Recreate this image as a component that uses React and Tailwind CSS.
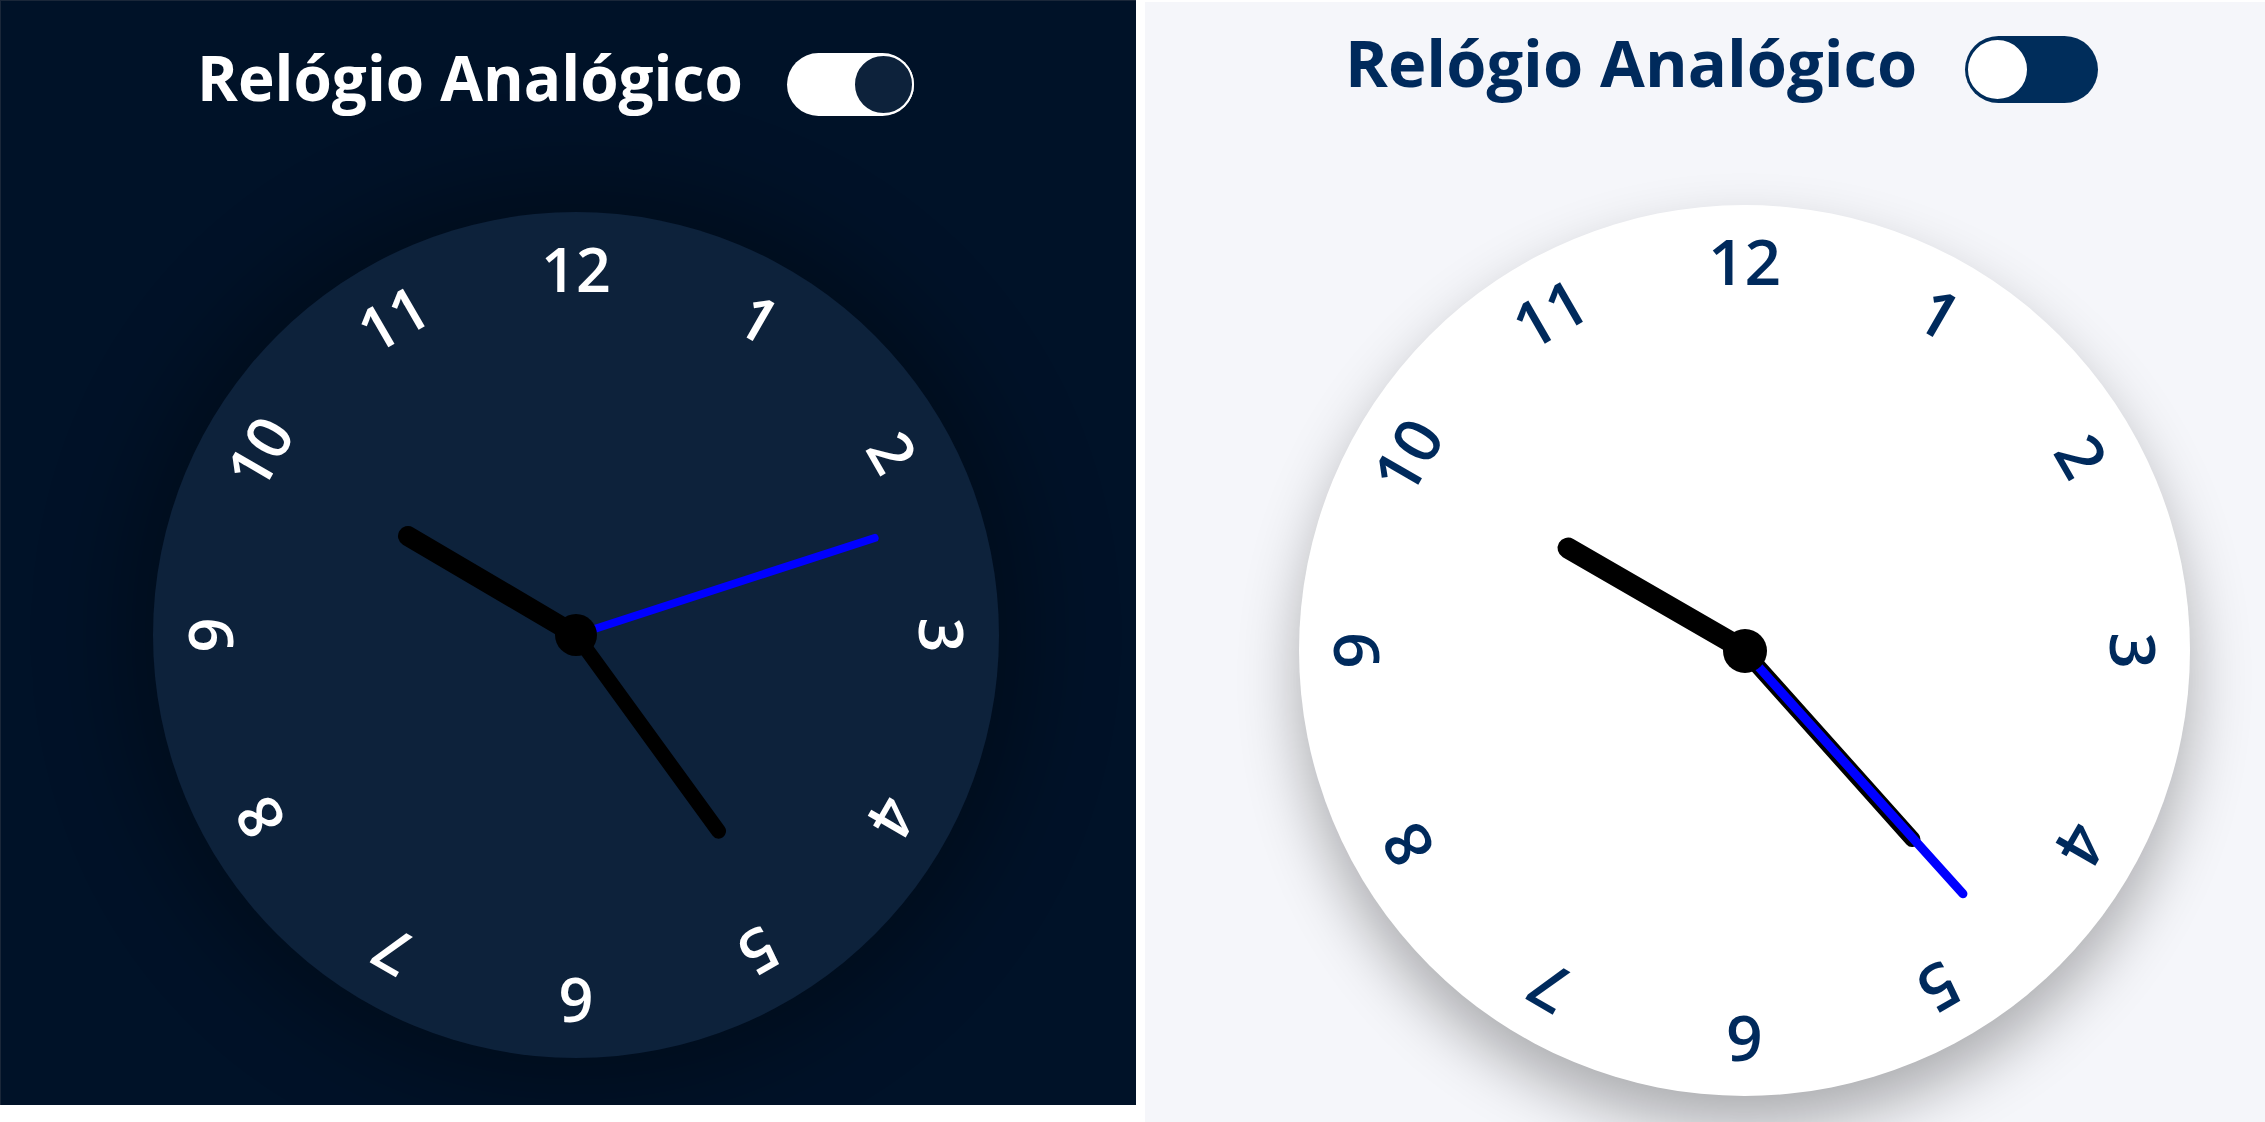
import React from "react";

const NUMS = [1, 2, 3, 4, 5, 6, 7, 8, 9, 10, 11, 12];

function Rotor({ deg, children }) {
  return (
    <div className="absolute inset-0" style={{ transform: `rotate(${deg}deg)` }}>
      {children}
    </div>
  );
}

function DarkPanel() {
  return (
    <div className="flex h-[1105px] w-[1136px] shrink-0 flex-col items-start overflow-hidden border-l border-t border-[#1a2739] bg-[#001228] font-['Open_Sans',sans-serif]">
      <div className="flex items-start gap-[44px] pl-[196px]">
        <h1 className="mt-[45px] text-[62px] font-bold leading-none text-white">Relógio Analógico</h1>
        <div className="mt-[52px] flex h-[63px] w-[127px] items-center justify-end rounded-full bg-white">
          <div className="h-[61px] w-[61px] rounded-full border-2 border-white bg-[#0d223b]" />
        </div>
      </div>
      <div className="relative ml-[152px] mt-[96px] h-[846px] w-[846px] shrink-0 rounded-full bg-[#0d223b] shadow-[0_0_90px_30px_rgba(0,0,0,0.3)]">
        {NUMS.map((n) => (
          <Rotor key={n} deg={n * 30}>
            <span className="absolute left-1/2 top-[26px] -translate-x-1/2 text-[61px] font-semibold leading-none text-white">
              {n}
            </span>
          </Rotor>
        ))}
        <Rotor deg={300.5}>
          <div className="absolute bottom-1/2 left-1/2 h-[215px] w-[20px] -translate-x-1/2 translate-y-[10px] rounded-full bg-black" />
        </Rotor>
        <Rotor deg={144}>
          <div className="absolute bottom-1/2 left-1/2 h-[257px] w-[15px] -translate-x-1/2 translate-y-[7px] rounded-full bg-black" />
        </Rotor>
        <Rotor deg={72}>
          <div className="absolute bottom-1/2 left-1/2 h-[322px] w-[8px] -translate-x-1/2 translate-y-[4px] rounded-full bg-[#0000ff]" />
        </Rotor>
        <div className="absolute left-1/2 top-1/2 h-[42px] w-[42px] -translate-x-1/2 -translate-y-1/2 rounded-full bg-black" />
      </div>
    </div>
  );
}

function LightPanel() {
  return (
    <div className="ml-[9px] mt-[2px] flex h-[1120px] w-[1120px] shrink-0 flex-col items-start bg-[#f5f6fa] font-['Open_Sans',sans-serif]">
      <div className="flex items-start gap-[48px] pl-[200px]">
        <h1 className="mt-[28px] text-[65px] font-bold leading-none text-[#002a5c]">Relógio Analógico</h1>
        <div className="mt-[34px] flex h-[67px] w-[133px] items-center justify-start rounded-full bg-[#002d5b]">
          <div className="ml-px h-[63px] w-[63px] rounded-full border-2 border-[#002d5b] bg-white" />
        </div>
      </div>
      <div className="relative ml-[154px] mt-[102px] h-[891px] w-[891px] shrink-0 rounded-full bg-white shadow-[0_30px_60px_rgba(0,0,0,0.3)]">
        {NUMS.map((n) => (
          <Rotor key={n} deg={n * 30}>
            <span className="absolute left-1/2 top-[24px] -translate-x-1/2 text-[64px] font-semibold leading-none text-[#002a5c]">
              {n}
            </span>
          </Rotor>
        ))}
        <Rotor deg={300}>
          <div className="absolute bottom-1/2 left-1/2 h-[225px] w-[21px] -translate-x-1/2 translate-y-[10px] rounded-full bg-black" />
        </Rotor>
        <Rotor deg={138.2}>
          <div className="absolute bottom-1/2 left-1/2 h-[269px] w-[16px] -translate-x-1/2 translate-y-[8px] rounded-full bg-black" />
        </Rotor>
        <Rotor deg={138}>
          <div className="absolute bottom-1/2 left-1/2 h-[337px] w-[9px] -translate-x-1/2 translate-y-[5px] rounded-full bg-[#0000ff]" />
        </Rotor>
        <div className="absolute left-1/2 top-1/2 h-[44px] w-[44px] -translate-x-1/2 -translate-y-1/2 rounded-full bg-black" />
      </div>
    </div>
  );
}

export default function App() {
  return (
    <div className="flex h-[1122px] w-[2265px] items-start overflow-hidden bg-white">
      <DarkPanel />
      <LightPanel />
    </div>
  );
}
